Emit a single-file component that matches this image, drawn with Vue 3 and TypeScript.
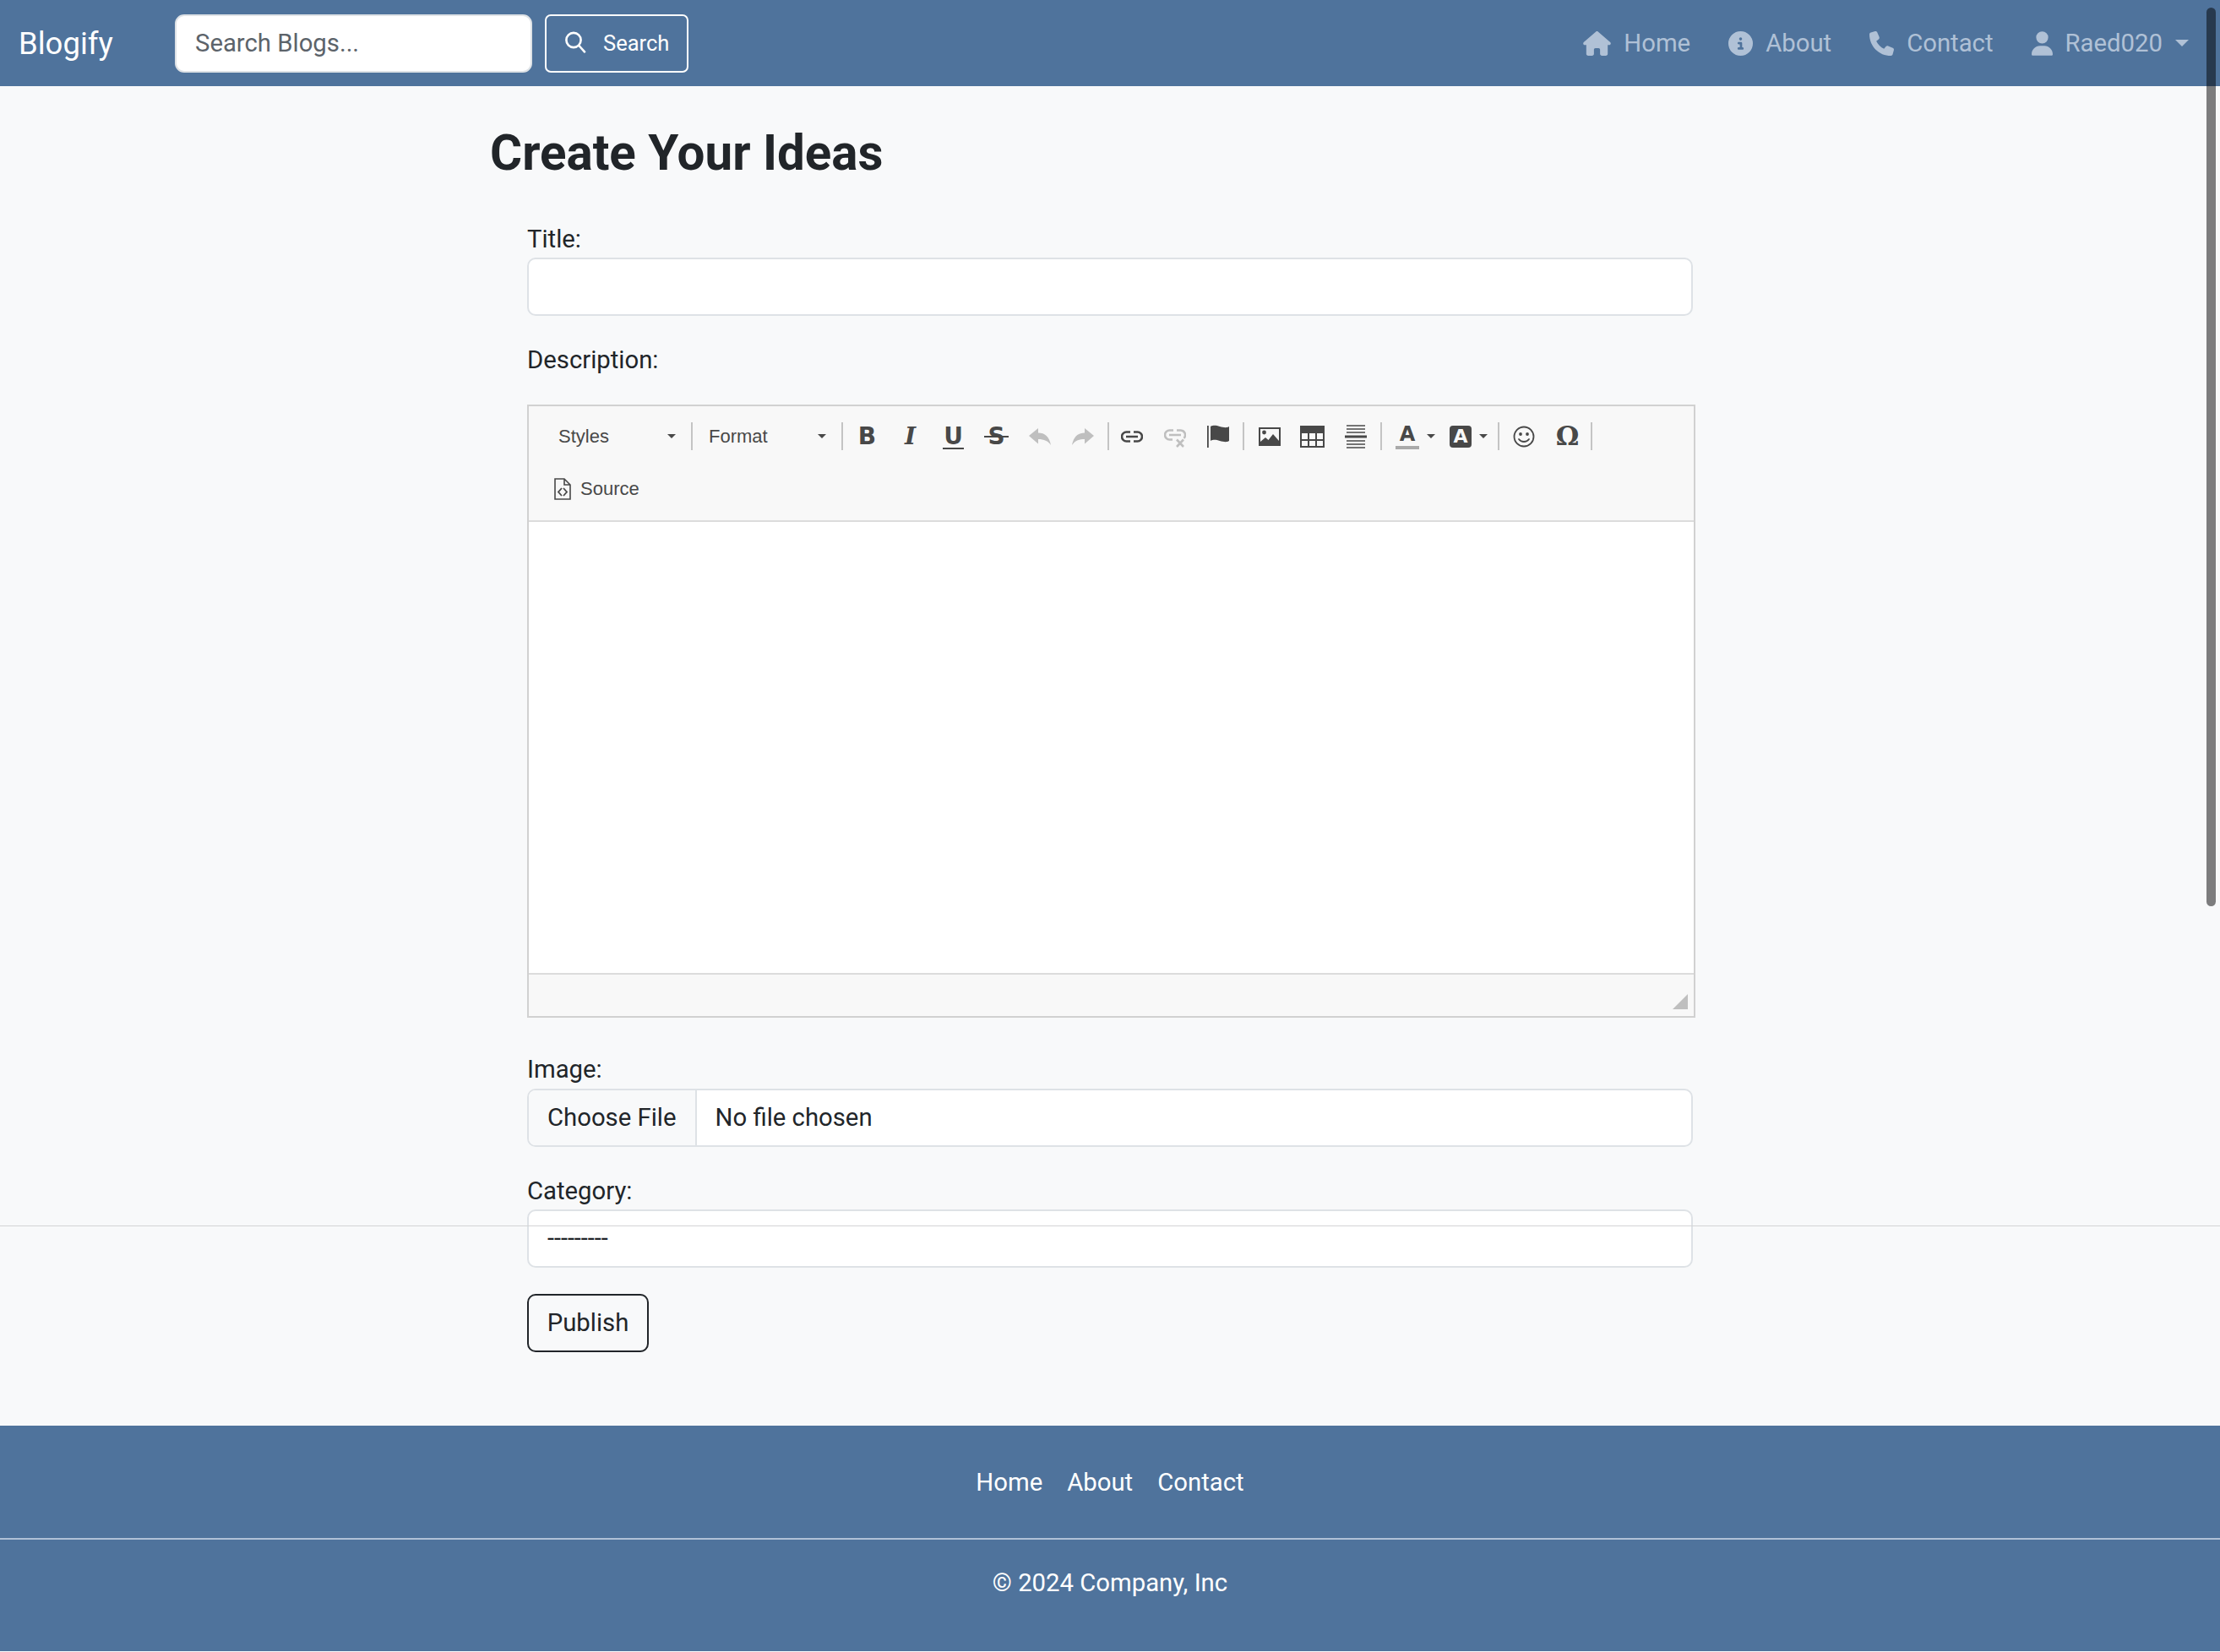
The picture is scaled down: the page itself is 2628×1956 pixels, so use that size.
<script setup lang="ts">
const navLinks = ['Home', 'About', 'Contact']
</script>

<template>
  <div class="page">
    <nav class="navbar">
      <a class="brand">Blogify</a>
      <form class="search" @submit.prevent>
        <input class="search-input" type="text" placeholder="Search Blogs..." />
        <button class="search-btn" type="button">
          <svg class="search-icon" viewBox="0 0 26 26" fill="none" stroke="currentColor" stroke-width="2.6" stroke-linecap="round">
            <circle cx="11" cy="10.5" r="8.6" />
            <path d="M17.4 17l6.6 7.4" />
          </svg>
          Search
        </button>
      </form>
      <ul class="nav-right">
        <li class="nav-item home">
          <svg class="nav-icon" viewBox="0 0 576 512" fill="currentColor"><path d="M575.800 255.500c0 18-15 32.100-32 32.100h-32l.7 160.200c0 2.700-.2 5.400-.5 8.100V472c0 22.100-17.900 40-40 40H456c-1.100 0-2.200 0-3.300-.1c-1.400 .1-2.800 .1-4.200 .1H416 392c-22.100 0-40-17.900-40-40V448 384c0-17.700-14.300-32-32-32H256c-17.700 0-32 14.300-32 32v64 24c0 22.100-17.900 40-40 40H160 128.100c-1.500 0-3-.1-4.500-.2c-1.200 .1-2.400 .2-3.600 .2H104c-22.100 0-40-17.900-40-40V360c0-.9 0-1.900 .1-2.800V287.600H32c-18 0-32-14-32-32.100c0-9 3-17 10-24L266.400 8c7-7 15-8 22-8s15 2 21 7L564.800 231.500c8 7 12 15 11 24z" /></svg>
          <span>Home</span>
        </li>
        <li class="nav-item about">
          <svg class="nav-icon" viewBox="0 0 512 512" fill="currentColor"><path d="M256 512A256 256 0 1 0 256 0a256 256 0 1 0 0 512zM216 336h24V272H216c-13.300 0-24-10.700-24-24s10.700-24 24-24h48c13.300 0 24 10.700 24 24v88h8c13.300 0 24 10.700 24 24s-10.700 24-24 24H216c-13.300 0-24-10.700-24-24s10.700-24 24-24zm40-208a32 32 0 1 1 0 64 32 32 0 1 1 0-64z" /></svg>
          <span>About</span>
        </li>
        <li class="nav-item contact">
          <svg class="nav-icon" viewBox="0 0 512 512" fill="currentColor"><path d="M164.900 24.600c-7.700-18.600-28-28.500-47.400-23.200l-88 24C12.100 30.200 0 46 0 64C0 311.400 200.600 512 448 512c18 0 33.800-12.100 38.600-29.500l24-88c5.300-19.400-4.600-39.700-23.200-47.400l-96-40c-16.300-6.800-35.200-2.100-46.300 11.600L304.700 368C234.300 334.700 177.300 277.700 144 207.300L193.300 167c13.700-11.200 18.400-30 11.600-46.300l-40-96z" /></svg>
          <span>Contact</span>
        </li>
        <li class="nav-item user">
          <svg class="nav-icon" viewBox="0 0 448 512" fill="currentColor"><path d="M224 256A128 128 0 1 0 224 0a128 128 0 1 0 0 256zm-45.700 48C79.800 304 0 383.800 0 482.300C0 498.700 13.300 512 29.700 512H418.300c16.400 0 29.700-13.300 29.700-29.700C448 383.800 368.200 304 269.700 304H178.300z" /></svg>
          <span>Raed020</span>
          <i class="nav-caret"></i>
        </li>
      </ul>
    </nav>

    <main class="content">
      <h1 class="title">Create Your Ideas</h1>
      <form class="post-form" @submit.prevent>
        <label class="field-label">Title:</label>
        <input class="form-control" type="text" />

        <label class="field-label desc-label">Description:</label>
        <div class="editor">
          <div class="toolbar">
            <div class="tb-row">
              <div class="combo"><span>Styles</span><i class="caret"></i></div>
              <i class="sep tight"></i>
              <div class="combo"><span>Format</span><i class="caret"></i></div>
              <i class="sep tight after-combo"></i>
              <span class="tb-btn glyph bold">B</span>
              <span class="tb-btn glyph italic">I</span>
              <span class="tb-btn glyph underline"><span class="ruled">U</span></span>
              <span class="tb-btn glyph strike"><span class="ruled">S</span></span>
              <span class="tb-btn off">
                <svg width="26" height="20" viewBox="0 0 26 20" fill="currentColor"><path d="M0 9L11 0v5.500C19 5.500 24 10 26 20c-3.500-5-8-7-15-7v5.500z" /></svg>
              </span>
              <span class="tb-btn off">
                <svg width="26" height="20" viewBox="0 0 26 20" fill="currentColor"><path d="M26 9L15 0v5.500C7 5.500 2 10 0 20c3.500-5 8-7 15-7v5.500z" /></svg>
              </span>
              <i class="sep"></i>
              <span class="tb-btn">
                <svg width="26" height="26" viewBox="0 0 26 26" fill="none" stroke="currentColor" stroke-width="2.600"><path d="M11 7.500H6.500a5.500 5.500 0 0 0 0 11H11M15 7.500h4.500a5.500 5.500 0 0 1 0 11H15M6 13h14" /></svg>
              </span>
              <span class="tb-btn off">
                <svg width="26" height="26" viewBox="0 0 26 26" fill="none" stroke="currentColor" stroke-width="2.600"><path d="M11 5.500H6.500a5.500 5.500 0 0 0 0 11H10M15 5.500h4.500a5.500 5.500 0 0 1 4 9.300M6 11h14M15 16.500l8 8.500M23 16.500l-8 8.500" /></svg>
              </span>
              <span class="tb-btn">
                <svg width="26" height="27" viewBox="0 0 26 27" fill="currentColor"><path d="M0 1h1.800v26H0zM4 2c4-2 7-1 11 0s8 2 11 0v17c-3 2-7 1-11 0s-7-2-11 0z" /></svg>
              </span>
              <i class="sep wide"></i>
              <span class="tb-btn">
                <svg width="26" height="22" viewBox="0 0 26 22" fill="none"><rect x="1" y="1" width="24" height="20" stroke="currentColor" stroke-width="2" /><circle cx="6.500" cy="6" r="2.400" fill="currentColor" /><path d="M2 20v-3l6-5 3.500 3L17 8l7 8v4z" fill="currentColor" /></svg>
              </span>
              <span class="tb-btn">
                <svg width="29" height="26" viewBox="0 0 29 26" fill="none"><rect x="1" y="1" width="27" height="24" stroke="currentColor" stroke-width="2" /><rect x="1" y="1" width="27" height="8" fill="currentColor" /><path d="M1 17h27M10 9v16M19 9v16" stroke="currentColor" stroke-width="2" /></svg>
              </span>
              <span class="tb-btn">
                <svg width="26" height="30" viewBox="0 0 26 30" fill="none" stroke="currentColor" stroke-width="1.500"><path d="M2 2h22M2 6h22M2 10h22M2 20h22M2 24h22M2 28h22" /><path d="M0 15h26" stroke-width="3" /></svg>
              </span>
              <i class="sep wide"></i>
              <span class="tb-btn with-caret">
                <span class="color-a">A</span><i class="caret"></i>
              </span>
              <span class="tb-btn with-caret">
                <span class="bg-a">A</span><i class="caret"></i>
              </span>
              <i class="sep wide-sm"></i>
              <span class="tb-btn">
                <svg width="26" height="26" viewBox="0 0 26 26" fill="none" stroke="currentColor" stroke-width="1.800"><circle cx="13" cy="13" r="11.500" /><circle cx="9" cy="10" r="1.900" fill="currentColor" stroke="none" /><circle cx="17" cy="10" r="1.900" fill="currentColor" stroke="none" /><path d="M7 16c3 4 9 4 12 0" stroke-linecap="round" /></svg>
              </span>
              <span class="tb-btn glyph omega">Ω</span>
              <i class="sep last"></i>
            </div>
            <div class="tb-row second">
              <svg class="source-icon" viewBox="0 0 20 26" fill="none" stroke="currentColor" stroke-width="1.600">
                <path d="M1 1h11l7 7v17H1zM12 1v7h7" />
                <path d="M9 12l-4 4.500L9 21M11 12l4 4.500-4 4.500" stroke-width="1.800" />
              </svg>
              <span class="source-text">Source</span>
            </div>
          </div>
          <div class="editor-body"></div>
          <div class="editor-foot"><i class="resize"></i></div>
        </div>

        <label class="field-label image-label">Image:</label>
        <div class="form-control file-input">
          <span class="file-btn">Choose File</span>
          <span class="file-name">No file chosen</span>
        </div>

        <label class="field-label cat-label">Category:</label>
        <select class="form-control cat-select">
          <option>---------</option>
        </select>

        <button class="publish" type="button">Publish</button>
      </form>
    </main>

    <footer class="footer">
      <ul class="foot-links">
        <li v-for="link in navLinks" :key="link">{{ link }}</li>
      </ul>
      <p class="copy">© 2024 Company, Inc</p>
    </footer>

    <div class="stitch-line"></div>
    <div class="scroll-thumb"></div>
  </div>
</template>

<style>
html,
body {
  margin: 0;
  overflow: hidden;
  background: #f8f9fa;
}
</style>

<style scoped>
.page {
  position: relative;
  height: 1956px;
  overflow: hidden;
  background: #f8f9fa;
  color: #212529;
  font-family: Roboto, 'Liberation Sans', sans-serif;
  font-size: 29.3px;
  line-height: 43px;
}

.navbar {
  height: 102px;
  box-sizing: border-box;
  display: flex;
  align-items: center;
  padding: 0 37px 0 22px;
  background: #4f739c;
}

.brand {
  width: 185px;
  color: #fff;
  font-size: 36.5px;
}

.search {
  display: flex;
  gap: 15px;
}

.search-input {
  width: 423px;
  height: 69px;
  box-sizing: border-box;
  padding: 0 22px;
  border: 2px solid #dee2e6;
  border-radius: 11px;
  background: #fff;
  font: inherit;
  color: #212529;
}

.search-input::placeholder {
  color: #5c636a;
  opacity: 1;
}

.search-btn {
  width: 170px;
  height: 69px;
  box-sizing: border-box;
  display: flex;
  align-items: center;
  padding: 0 0 0 21px;
  gap: 20px;
  border: 2px solid #fff;
  border-radius: 7px;
  background: transparent;
  color: #fff;
  font-family: inherit;
  font-size: 25.5px;
}

.search-icon {
  width: 26px;
  height: 26px;
  margin-top: -3px;
}

.nav-right {
  display: flex;
  align-items: center;
  margin: 0 0 0 auto;
  padding: 0;
  list-style: none;
  color: #b0c1d6;
}

.nav-item {
  display: flex;
  align-items: center;
  gap: 15px;
  margin-left: 45px;
}

.nav-icon {
  height: 29px;
  display: block;
}

.home .nav-icon {
  width: 33px;
}

.about .nav-icon,
.contact .nav-icon {
  width: 29px;
}

.user .nav-icon {
  width: 25px;
}

.nav-caret {
  width: 0;
  height: 0;
  border-left: 8px solid transparent;
  border-right: 8px solid transparent;
  border-top: 8px solid #b0c1d6;
}

.content {
  margin-left: 580px;
  width: 1430px;
  padding-top: 45px;
}

.title {
  margin: 0 0 46px;
  font-size: 58.3px;
  font-weight: 700;
  line-height: 69px;
}

.post-form {
  display: flex;
  flex-direction: column;
  align-items: flex-start;
  margin-left: 44px;
}

.field-label {
  height: 43px;
  color: #212529;
}

.form-control {
  width: 1380px;
  height: 69px;
  box-sizing: border-box;
  flex: none;
  border: 2px solid #dee2e6;
  border-radius: 10px;
  background: #fff;
  font: inherit;
  color: #212529;
}

.desc-label {
  margin-top: 31px;
  margin-bottom: 31px;
}

.editor {
  width: 1383px;
  box-sizing: border-box;
  border: 2px solid #d1d1d1;
  background: #fff;
}

.toolbar {
  height: 135px;
  box-sizing: border-box;
  background: #f8f8f8;
  color: #484848;
  font-family: 'Liberation Sans', Arial, sans-serif;
  font-size: 22px;
}

.tb-row {
  height: 33px;
  display: flex;
  align-items: center;
  padding: 19px 0 0 16px;
}

.tb-row.second {
  padding: 29px 0 0 30px;
}

.combo {
  flex: none;
  width: 176px;
  box-sizing: border-box;
  display: flex;
  align-items: center;
  justify-content: space-between;
  padding: 0 18px 0 19px;
}

.caret {
  width: 0;
  height: 0;
  border-left: 5.5px solid transparent;
  border-right: 5.5px solid transparent;
  border-top: 5.5px solid #484848;
}

.sep {
  flex: none;
  width: 2px;
  height: 33px;
  margin: 0 1px 0 4px;
  background: #c4c4c4;
}

.sep.tight {
  margin: 0;
}

.sep.after-combo {
  margin-right: 3px;
}

.sep.wide {
  margin-right: 4px;
}

.sep.wide-sm {
  margin-right: 3px;
}

.sep.last {
  margin-left: 3px;
}

.tb-btn {
  flex: none;
  width: 51px;
  height: 33px;
  display: flex;
  align-items: center;
  justify-content: center;
}

.tb-btn.off {
  color: #bfbfbf;
}

.glyph {
  font-family: 'DejaVu Sans', sans-serif;
  font-weight: 700;
  font-size: 28px;
}

.glyph.italic {
  font-family: 'DejaVu Serif', serif;
  font-style: italic;
}

.ruled {
  position: relative;
}

.ruled::after {
  content: '';
  position: absolute;
  height: 2px;
  background: #484848;
}

.underline .ruled::after {
  left: -1px;
  right: -1px;
  bottom: 6px;
}

.strike .ruled::after {
  left: -4px;
  right: -4px;
  top: 48%;
}

.glyph.omega {
  font-family: 'DejaVu Serif', serif;
  font-size: 31px;
  padding-left: 2px;
  box-sizing: border-box;
}

.with-caret {
  width: 65px;
  justify-content: flex-start;
  padding-left: 12px;
  box-sizing: border-box;
  gap: 9px;
}

.with-caret + .with-caret {
  width: 64px;
  padding-left: 11px;
}

.color-a {
  width: 28px;
  height: 30px;
  border-bottom: 4px solid #aaa;
  box-sizing: border-box;
  text-align: center;
  font-family: 'DejaVu Sans', sans-serif;
  font-size: 24px;
  font-weight: 700;
  line-height: 25px;
}

.bg-a {
  width: 26px;
  height: 26px;
  border-radius: 4px;
  background: #484848;
  color: #f8f8f8;
  text-align: center;
  font-family: 'DejaVu Sans', sans-serif;
  font-size: 22px;
  font-weight: 700;
  line-height: 26px;
}

.source-icon {
  width: 20px;
  height: 26px;
  flex: none;
}

.source-text {
  margin-left: 11px;
}

.editor-body {
  height: 534px;
  border-top: 2px solid #dcdcdc;
  border-bottom: 2px solid #dcdcdc;
}

.editor-foot {
  height: 49px;
  position: relative;
  background: #f8f8f8;
}

.resize {
  position: absolute;
  right: 7px;
  bottom: 8px;
  width: 0;
  height: 0;
  border-left: 18px solid transparent;
  border-bottom: 18px solid #bfbfbf;
}

.image-label {
  margin-top: 40px;
  height: 44px;
}

.file-input {
  display: flex;
  align-items: center;
  overflow: hidden;
  line-height: 65px;
}

.file-btn {
  height: 100%;
  padding: 0 22px;
  background: #f8f9fa;
  border-right: 2px solid #dee2e6;
}

.file-name {
  margin-left: 22px;
}

.cat-label {
  margin-top: 31px;
  height: 43px;
}

.cat-select {
  appearance: none;
  padding: 0 0 0 22px;
  font-size: 28.8px;
}

.publish {
  width: 144px;
  height: 69px;
  margin-top: 31px;
  border: 2px solid #212529;
  border-radius: 10px;
  background: transparent;
  color: #212529;
  font: inherit;
}

.footer {
  position: absolute;
  left: 0;
  right: 0;
  top: 1688px;
  height: 267px;
  background: #4f739c;
  color: #fff;
  text-align: center;
}

.foot-links {
  height: 135px;
  box-sizing: border-box;
  display: flex;
  justify-content: center;
  gap: 29px;
  margin: 0;
  padding: 46px 0 0;
  list-style: none;
  border-bottom: 2px solid #b0c1d6;
}

.copy {
  margin: 0;
  padding-top: 30px;
}

.stitch-line {
  position: absolute;
  left: 0;
  right: 0;
  top: 1451px;
  height: 1px;
  background: #d3d4d5;
}

.scroll-thumb {
  position: absolute;
  left: 2612px;
  top: 9px;
  width: 11px;
  height: 1064px;
  border-radius: 6px;
  background: rgba(0, 0, 0, 0.5);
}
</style>
